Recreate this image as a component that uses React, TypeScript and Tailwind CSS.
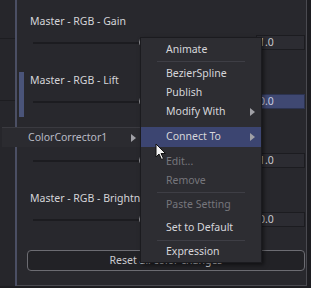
import React from "react";

const font = { fontFamily: '"Noto Sans", "Open Sans", sans-serif' };

interface Group {
  label: string;
  value: string;
  active?: boolean;
}

// third label sits under the ColorCorrector1 menu row, so it is left blank
const groups: Group[] = [
  { label: "Master - RGB - Gain", value: "1.0" },
  { label: "Master - RGB - Lift", value: "0.0", active: true },
  { label: "", value: "1.0" },
  { label: "Master - RGB - Brightness", value: "0.0" },
];

interface MenuItem {
  label?: string;
  sep?: boolean;
  h: string;
  disabled?: boolean;
  sub?: boolean;
  hot?: boolean;
}

const menuItems: MenuItem[] = [
  { label: "Animate", h: "h-[18px]" },
  { sep: true, h: "h-[5px]" },
  { label: "BezierSpline", h: "h-[19px]" },
  { label: "Publish", h: "h-[19px]" },
  { label: "Modify With", h: "h-[19px]", sub: true },
  { sep: false, h: "h-[6px]" },
  { label: "Connect To", h: "h-[20px]", sub: true, hot: true },
  { sep: false, h: "h-[5px]" },
  { label: "Edit...", h: "h-[19px]", disabled: true },
  { label: "Remove", h: "h-[19px]", disabled: true },
  { sep: true, h: "h-[5px]" },
  { label: "Paste Setting", h: "h-[19px]", disabled: true },
  { sep: false, h: "h-[4px]" },
  { label: "Set to Default", h: "h-[19px]" },
  { sep: true, h: "h-[6px]" },
  { label: "Expression", h: "h-[18px]" },
];

function Arrow() {
  return (
    <svg width="5" height="8" viewBox="0 0 5 8" className="shrink-0">
      <path d="M0 0 L5 4 L0 8 Z" fill="#a0a0a6" />
    </svg>
  );
}

function SliderGroup({ g }: { g: Group }) {
  return (
    <div className="flex h-[59px]">
      <div className="w-[13px] shrink-0 pl-[2px] pt-[13px]">
        {g.active && <div className="h-[45px] w-[5px] bg-[#4a5479]" />}
      </div>
      <div className="flex-1 pt-[14px]">
        <div className="h-[14px] text-[10.5px] leading-[14px] text-[#d4d4d8] whitespace-nowrap">
          {g.label}
        </div>
        <div className="mt-[7px] flex h-[15px] items-center">
          <div className="relative ml-[3px] h-[15px] w-[217px]">
            <div className="absolute left-0 right-0 top-[7px] h-[2px] bg-[#1c1c20]" />
            <div className="absolute left-[106px] top-[3px] h-[9px] w-[9px] rounded-full bg-[#8e8e92]" />
          </div>
          <div
            className={`ml-auto flex h-[15px] w-[49px] items-center border px-[2px] text-[10.5px] ${
              g.active
                ? "border-[#2c3350] bg-[#3f4872] text-[#c8cce0]"
                : "border-[#1c1c20] bg-[#2c2c32] text-[#c8c8cc]"
            }`}
          >
            {g.value}
          </div>
        </div>
      </div>
    </div>
  );
}

export default function App() {
  return (
    <div
      className="relative h-[288px] w-[311px] overflow-hidden bg-[#1d1d21]"
      style={font}
    >
      <div className="flex h-[286px] w-[307px]">
        {/* left neighbour strip */}
        <div className="flex w-[15px] flex-col bg-[#26262b]">
          <div className="mt-[38px] h-px bg-[#1d1d21]" />
          <div className="mt-[61px] h-px bg-[#1d1d21]" />
        </div>
        <div className="w-[2px] bg-[#4b4f64]" />
        <div className="flex flex-1 flex-col border-b border-r border-[#4a4a50] bg-[#28282d] pr-px">
          {groups.map((g, i) => (
            <SliderGroup key={i} g={g} />
          ))}
          <div className="ml-[10px] mt-[14px] flex h-[21px] items-center justify-center rounded-[4px] border border-[#6c6c72] bg-[#222226] text-[10.5px] text-[#cacace]">
            Reset all color changes
          </div>
        </div>
      </div>

      {/* parent menu row */}
      <div className="absolute left-[2px] top-[127px] flex h-[20px] w-[138px] items-center border-t border-[#3a3a40] bg-[#2b2b30] pl-[26px] pr-[4px] text-[10.5px] text-[#b8bac4]">
        <span className="flex-1">ColorCorrector1</span>
        <Arrow />
      </div>

      {/* submenu */}
      <div className="absolute left-[140px] top-[37px] flex w-[122px] flex-col border border-[#1b1b1f] bg-[#2d2d32] pb-px pt-[3px] shadow-[2px_2px_4px_rgba(0,0,0,0.5)]">
        {menuItems.map((it, i) =>
          it.label ? (
            <div
              key={i}
              className={`flex ${it.h} items-center pl-[25px] pr-[6px] text-[10.5px] ${
                it.hot ? "bg-[#3c4571]" : ""
              } ${it.disabled ? "text-[#76767c]" : "text-[#d6d6da]"}`}
            >
              <span className="flex-1 whitespace-nowrap">{it.label}</span>
              {it.sub && <Arrow />}
            </div>
          ) : (
            <div key={i} className={`flex ${it.h} items-center px-[16px]`}>
              {it.sep && <div className="h-px w-full bg-[#3e3e45]" />}
            </div>
          )
        )}
      </div>

      {/* mouse cursor */}
      <svg
        className="absolute left-[155px] top-[143px]"
        width="12"
        height="18"
        viewBox="0 0 12 18"
      >
        <path
          d="M1 1 L1 14 L4 11 L6.5 16.5 L8.5 15.5 L6 10.5 L10.5 10.5 Z"
          fill="#f2f2f2"
          stroke="#111"
          strokeWidth="1"
          strokeLinejoin="round"
        />
      </svg>
    </div>
  );
}
